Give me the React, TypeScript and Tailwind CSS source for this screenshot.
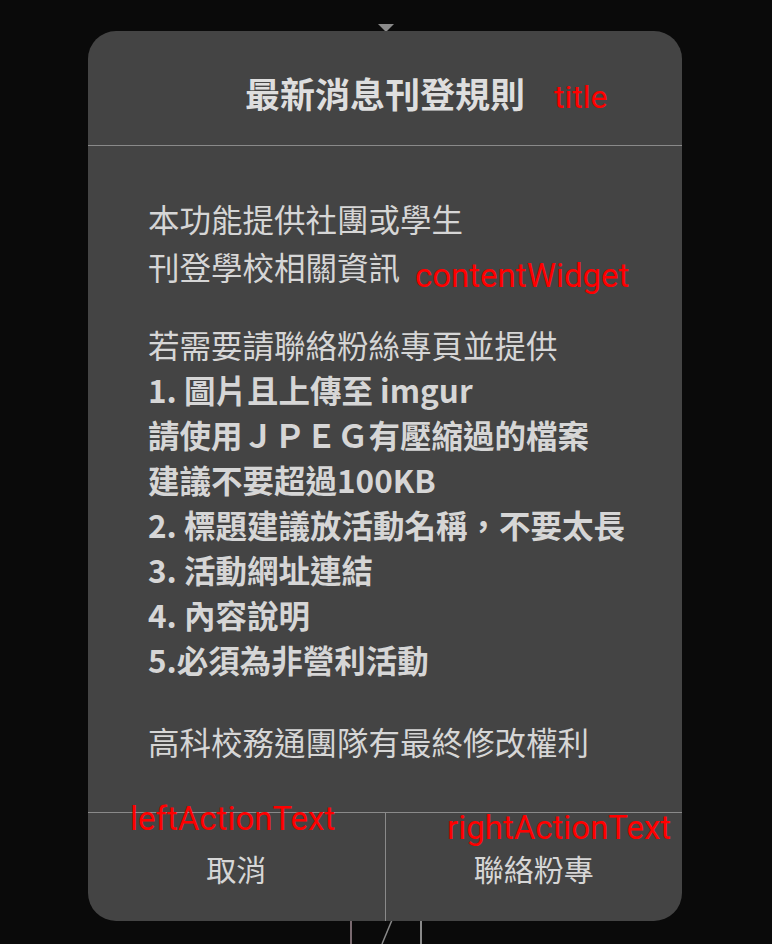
const cjk = { fontFamily: '"Noto Sans CJK TC", "Noto Sans", sans-serif' };
const label = { fontFamily: 'Roboto, "Liberation Sans", sans-serif' };

const bold = [
  "1. 圖片且上傳至 imgur",
  "請使用ＪＰＥＧ有壓縮過的檔案",
  "建議不要超過100KB",
  "2. 標題建議放活動名稱，不要太長",
  "3. 活動網址連結",
  "4. 內容說明",
  "5.必須為非營利活動",
];

export default function App() {
  return (
    <div className="relative w-[772px] h-[944px] overflow-hidden bg-[#0a0a0a]" style={cjk}>
      {/* bits of the page behind the dialog */}
      <svg className="absolute left-0 top-0" width="772" height="944">
        <polygon points="378,24 394,24 386,32" fill="#8a8a8a" />
        <line x1="351" y1="920" x2="351" y2="944" stroke="#7a6a70" strokeWidth="2" />
        <line x1="421" y1="920" x2="421" y2="944" stroke="#8a8a8a" strokeWidth="2" />
        <line x1="392" y1="920" x2="382" y2="944" stroke="#8a8a8a" strokeWidth="1.5" />
      </svg>

      <div className="relative ml-[88px] mt-[31px] w-[594px] h-[890px] rounded-[28px] bg-[#444444] flex flex-col overflow-hidden">
        <div className="h-[114px] pt-[8px] flex items-center justify-center">
          <h1 className="text-[35px] leading-none font-bold text-[#dedede]">最新消息刊登規則</h1>
        </div>
        <div className="h-px bg-[#8a8a8a]" />

        <div className="flex-1 pl-[60px] pr-[20px] pt-[48px] text-[31.5px] text-[#d6d6d6] whitespace-nowrap">
          <p className="leading-[48px]">
            本功能提供社團或學生
            <br />
            刊登學校相關資訊
          </p>
          <div className="mt-[32px] leading-[45px]">
            <p>若需要請聯絡粉絲專頁並提供</p>
            {bold.map((t) => (
              <p key={t} className="font-bold">
                {t}
              </p>
            ))}
          </div>
          <p className="mt-[37px] leading-[45px]">高科校務通團隊有最終修改權利</p>
        </div>

        <div className="h-px bg-[#8a8a8a]" />
        <div className="h-[108px] flex text-[30px] text-[#d6d6d6]">
          <div className="flex-1 flex items-center justify-center pt-[2px]">取消</div>
          <div className="w-px bg-[#8a8a8a]" />
          <div className="flex-1 flex items-center justify-center pt-[2px]">聯絡粉專</div>
        </div>
      </div>

      {/* widget annotations */}
      <span className="absolute left-[554px] top-[81px] text-[32px] leading-none text-[#ff0000]" style={label}>title</span>
      <span className="absolute left-[415px] top-[259px] text-[33px] leading-none text-[#ff0000]" style={label}>contentWidget</span>
      <span className="absolute left-[130px] top-[802px] text-[33px] leading-none text-[#ff0000]" style={label}>leftActionText</span>
      <span className="absolute left-[447px] top-[811px] text-[33px] leading-none text-[#ff0000]" style={label}>rightActionText</span>
    </div>
  );
}
